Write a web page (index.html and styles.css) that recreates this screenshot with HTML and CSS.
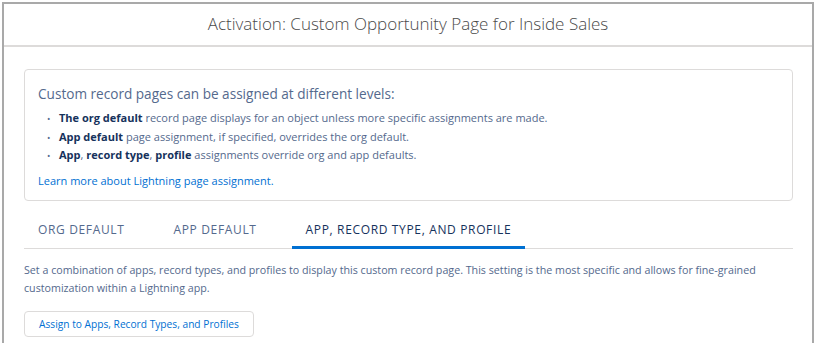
FILE: index.html
```html
<!DOCTYPE html>
<html lang="en">
<head>
    <meta charset="UTF-8">
    <title>Activation: Custom Opportunity Page for Inside Sales</title>
    <link rel="stylesheet" href="styles.css">
</head>
<body>
    <div class="modal">
        <div class="modal-header">
            <h2 class="title">Activation: Custom Opportunity Page for Inside Sales</h2>
        </div>
        <div class="modal-body">
            <div class="info-box">
                <h3>Custom record pages can be assigned at different levels:</h3>
                <ul>
                    <li><b>The org default</b> record page displays for an object unless more specific assignments are made.</li>
                    <li><b>App default</b> page assignment, if specified, overrides the org default.</li>
                    <li><b>App</b>, <b>record type</b>, <b>profile</b> assignments override org and app defaults.</li>
                </ul>
                <a class="link" href="#">Learn more about Lightning page assignment.</a>
            </div>

            <div class="tabs">
                <div class="tab">ORG DEFAULT</div>
                <div class="tab">APP DEFAULT</div>
                <div class="tab active">APP, RECORD TYPE, AND PROFILE</div>
            </div>

            <p class="desc">Set a combination of apps, record types, and profiles to display this custom record page. This setting is the most specific and allows for fine-grained customization within a Lightning app.</p>

            <button class="btn">Assign to Apps, Record Types, and Profiles</button>
        </div>
    </div>
</body>
</html>
```

FILE: styles.css
```css
* {
    box-sizing: border-box;
    font-family: 'Open Sans', sans-serif;
}
body {
    margin: 0;
    background: white;
    overflow: hidden;
}
.modal {
    margin: 2px 0 0 2px;
    width: 812px;
    height: 341px;
    border: 2px solid #a9a9a9;
    border-bottom: none;
}
.modal-header {
    height: 43px;
    border-bottom: 2px solid #dddbda;
    display: flex;
    align-items: center;
    justify-content: center;
}
.title {
    margin: 0 0 2px 0;
    font-size: 17px;
    font-weight: 300;
    color: #4a4a4a;
}
.modal-body {
    padding: 22px 19px 0 20px;
}
.info-box {
    border: 1px solid #dddbda;
    border-radius: 4px;
    padding: 15px 13px 11px 13px;
}
.info-box h3 {
    margin: 0 0 6px 0;
    font-size: 13.6px;
    line-height: 18px;
    font-weight: 400;
    color: #54698d;
}
.info-box ul {
    margin: 0 0 8px 0;
    padding-left: 21px;
    list-style: none;
}
.info-box li {
    font-size: 11px;
    line-height: 18.5px;
    color: #54698d;
}
.info-box li::before {
    content: '•';
    display: inline-block;
    width: 12px;
    margin-left: -12px;
    font-size: 9px;
    line-height: 1;
}
.info-box b {
    color: #16325c;
    font-weight: 700;
}
.link {
    display: block;
    font-size: 11px;
    line-height: 16px;
    color: #0070d2;
    text-decoration: none;
}
.tabs {
    display: flex;
    gap: 21px;
    margin-top: 13px;
    border-bottom: 1px solid #dddbda;
}
.tab {
    padding: 8px 14px;
    font-size: 12px;
    line-height: 16px;
    letter-spacing: 0.65px;
    color: #54698d;
    border-bottom: 3px solid transparent;
    margin-bottom: -1px;
}
.tab.active {
    color: #16325c;
    border-bottom-color: #0070d2;
}
.desc {
    margin: 12px 0 0 0;
    font-size: 10.7px;
    line-height: 18px;
    color: #54698d;
}
.btn {
    display: block;
    margin-top: 14px;
    height: 26px;
    padding: 0 14px;
    background: white;
    border: 1px solid #dddbda;
    border-radius: 4px;
    color: #0070d2;
    font-size: 10.2px;
}
```
